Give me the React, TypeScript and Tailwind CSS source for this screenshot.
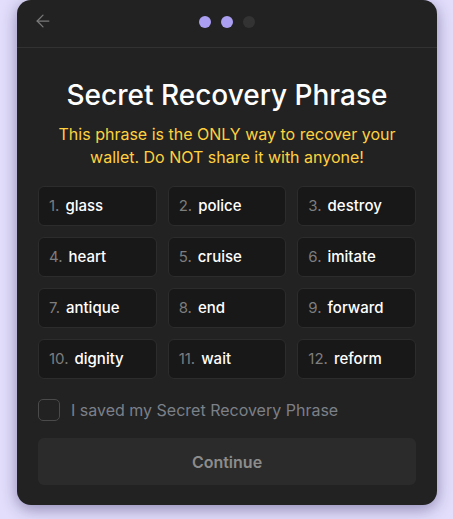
import { ArrowLeft } from "lucide-react";

const words = [
  "glass",
  "police",
  "destroy",
  "heart",
  "cruise",
  "imitate",
  "antique",
  "end",
  "forward",
  "dignity",
  "wait",
  "reform",
];

const App = () => {
  return (
    <div
      className="min-h-[519px] w-[453px] bg-[#e2defb] pl-[17px] overflow-hidden"
      style={{ fontFamily: "Inter, 'Noto Sans', sans-serif" }}
    >
      <div className="w-[420px] h-[505px] bg-[#222222] rounded-[14px] shadow-[0_4px_16px_rgba(40,30,90,0.45)] flex flex-col">
        <div className="h-[48px] border-b border-[#323232] flex items-center px-[16px] relative">
          <ArrowLeft size={20} strokeWidth={1.5} className="text-[#7a7a7a] -mt-[6px]" />
          <div className="absolute left-0 right-0 top-[16px] flex justify-center gap-[10px]">
            <span className="w-[12px] h-[12px] rounded-full bg-[#ab9ff2]" />
            <span className="w-[12px] h-[12px] rounded-full bg-[#ab9ff2]" />
            <span className="w-[12px] h-[12px] rounded-full bg-[#333333]" />
          </div>
        </div>

        <div className="px-[21px] flex flex-col">
          <h1 className="text-[28px] leading-[34px] text-white text-center mt-[30px] font-medium">
            Secret Recovery Phrase
          </h1>
          <p className="text-[16px] leading-[23px] text-[#ffd13f] text-center mt-[11px] px-[10px]">
            This phrase is the ONLY way to recover your wallet. Do NOT share it with anyone!
          </p>

          <div className="grid grid-cols-3 gap-x-[11px] gap-y-[11px] mt-[17px]">
            {words.map((w, i) => (
              <div
                key={w}
                className="h-[40px] bg-[#181818] border border-[#2c2c2c] rounded-[6px] flex items-center pl-[10px] text-[15px]"
              >
                <span className="text-[#7d7d7d]">{i + 1}.</span>
                <span className="text-white font-medium ml-[6px]">{w}</span>
              </div>
            ))}
          </div>

          <label className="flex items-center mt-[19px] gap-[11px]">
            <span className="w-[22px] h-[22px] rounded-[5px] border border-[#4a4a4a]" />
            <span className="text-[16px] text-[#7c8088]">I saved my Secret Recovery Phrase</span>
          </label>

          <button className="mt-[16px] h-[47px] rounded-[6px] bg-[#2b2b2b] text-[#8c8c8c] text-[16px] font-semibold">
            Continue
          </button>
        </div>
      </div>
    </div>
  );
};

export default App;
